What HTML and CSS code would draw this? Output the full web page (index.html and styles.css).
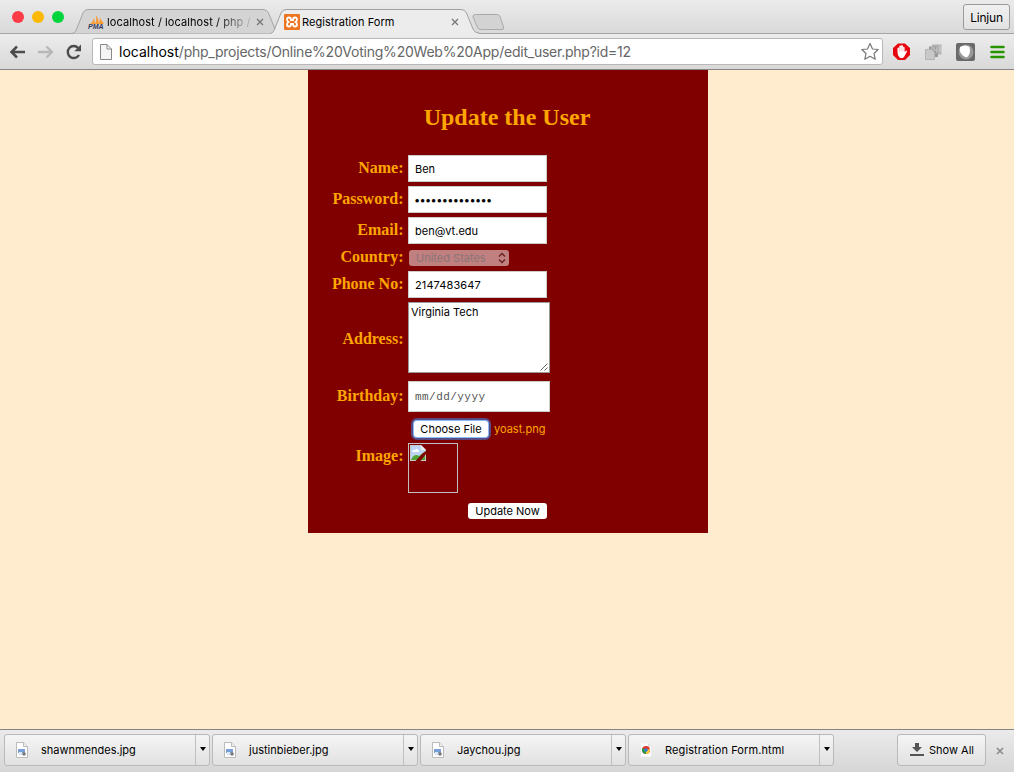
FILE: index.html
```html
<!DOCTYPE html>
<html lang="en">
<head>
<meta charset="utf-8">
<title>Registration Form</title>
<link rel="stylesheet" href="styles.css">
</head>
<body>
<header class="tabstrip">
  <div class="lights"><i class="red"></i><i class="yellow"></i><i class="green"></i></div>
  <div class="tab tab-back">
    <svg class="tab-shape" width="208" height="25" viewBox="0 0 208 25"><path d="M0 24.5C3 24 4 22 5 19L11 4Q12.500 .5 16 .5H191Q195 .5 196.500 4L203 20Q204.500 24 208 24.500" fill="#d4d4d4" stroke="#a5a5a5"/></svg>
    <svg class="pma" width="17" height="15" viewBox="0 0 17 15"><path d="M2 9Q5 7 6 3L7 9zM7 9Q9 5 8 0Q11 4 11 9zM11 9L12 3Q14 6 16 9z" fill="#f79a32"/><text x="0" y="14" class="pma-text">PMA</text></svg>
    <span class="tab-title fade">localhost / localhost / php /</span>
    <svg class="tab-close" width="8" height="8"><path d="M1 1L7 7M7 1L1 7" stroke="#777" stroke-width="1.300"/></svg>
  </div>
  <div class="tab tab-front">
    <svg class="tab-shape" width="210" height="26" viewBox="0 0 210 26"><path d="M0 24.5C3 24 4 22 5 19L11 4Q12.500 .5 16 .5H191Q195 .5 196.500 4L203 20Q204.500 24 210 24.500V26H0z" fill="#ececec"/><path d="M0 24.5C3 24 4 22 5 19L11 4Q12.500 .5 16 .5H191Q195 .5 196.500 4L203 20Q204.500 24 210 24.500" fill="none" stroke="#a0a0a0"/></svg>
    <svg class="xampp" width="16" height="16" viewBox="0 0 16 16"><rect width="16" height="16" rx="1" fill="#ee7623"/><path d="M5 3.500Q2.800 3.500 3 5.500Q3.100 7 4.500 8Q3 9 3 10.500Q3 12.500 5 12.500Q7 12.500 7 10H9Q9 12.500 11 12.500Q13 12.500 13 10.500Q13 9 11.500 8Q13 7 13 5.500Q13 3.500 11 3.500Q9 3.500 9 6H7Q7 3.500 5 3.500z" fill="none" stroke="#fff" stroke-width="1.800"/></svg>
    <span class="tab-title">Registration Form</span>
    <svg class="tab-close" width="8" height="8"><path d="M1 1L7 7M7 1L1 7" stroke="#777" stroke-width="1.300"/></svg>
  </div>
  <svg class="new-tab" width="34" height="17"><path d="M3.500 .5H25Q27 .5 28 2.500L31.500 13Q32.500 15.500 30 15.500H9Q6.500 15.500 5.500 13.500L1 3Q.5 .5 3.500 .5z" fill="#d3d3d3" stroke="#a9a9a9"/></svg>
  <div class="profile">Linjun</div>
</header>
<nav class="toolbar">
  <svg class="nav-icons" width="84" height="20" viewBox="0 0 84 20"><path d="M25 10H11.500M17 4.500L11.500 10L17 15.500" fill="none" stroke="#4c4c4c" stroke-width="2.500"/><path d="M38 10H51M46.500 4.500L52 10L46.500 15.500" fill="none" stroke="#b8b8b8" stroke-width="2.300"/><path d="M78.200 6A6 6 0 1 0 79 13" fill="none" stroke="#4c4c4c" stroke-width="2.400"/><path d="M81 2.500V9.200H74.300z" fill="#4c4c4c"/></svg>
  <div class="address">
    <svg class="page-icon" width="12" height="16"><path d="M.5 .5H7L11.500 5V15.500H.5zM7 .5V5H11.500" fill="#f5f5f5" stroke="#888"/></svg>
    <span class="url"><b>localhost</b>/php_projects/Online%20Voting%20Web%20App/edit_user.php?id=12</span>
    <svg class="star" width="20" height="19" viewBox="0 0 20 19"><path d="M10 1.500L12.500 7L18.200 7.500L14 11.500L15.200 17.200L10 14.300L4.800 17.200L6 11.500L1.800 7.500L7.500 7z" fill="#fff" stroke="#777" stroke-width="1.200" stroke-linejoin="round"/></svg>
  </div>
  <svg class="extensions" width="118" height="20" viewBox="0 0 118 20">
    <path d="M6 1.500H13L18 6V13L13 18H6L1 13V6z" fill="#e8060e"/><path d="M5.500 10V6Q6.500 5 7.300 6V4Q8.300 3 9.200 4V3.500Q10.200 2.500 11 4V5Q12 4.500 12.600 5.500V10L14 8.500Q15.500 8.300 14.800 10L12 15Q10.500 17 7.500 15.500Q5.500 14 5.500 10z" fill="#fff"/><path d="M7.400 5.500V9.500M9.200 4.500V9.500M11 5V9.500" stroke="#f29090" stroke-width=".5"/>
    <path d="M40 2.500H49.500V12.500H40z" fill="#b4b4b4"/><path d="M37 4.500H46V15H37z" fill="#999"/><path d="M39 6H43M41 8H45M45 5V11M48 4V10" stroke="#d0d0d0"/><path d="M33.500 7.500H39.500L42.500 10.500V17.500H33.500z" fill="#c8c8c8" stroke="#b4b4b4"/>
    <rect x="64" y="1" width="19" height="18" rx="2" fill="#696969"/><circle cx="74" cy="10" r="7.500" fill="#999"/><path d="M68 5Q73 2 77.500 5Q79.500 12 74.500 15.500Q66 12 68 5z" fill="#fff"/>
    <path d="M99.500 5H111.500M99.500 10H111.500M99.500 15H111.500" stroke="#289500" stroke-width="2.600" stroke-linecap="round"/>
  </svg>
</nav>
<main class="page">
  <section class="panel">
    <h2 class="heading">Update the User</h2>
    <div class="form">
      <label class="label">Name:</label><div class="field">Ben</div>
      <label class="label">Password:</label><div class="field dots">••••••••••••••</div>
      <label class="label">Email:</label><div class="field email">ben@vt.edu</div>
      <label class="label">Country:</label>
      <div class="select"><span>United States</span><svg width="8" height="12"><path d="M1 4.500L4 1.500L7 4.500M1 7.500L4 10.500L7 7.500" fill="none" stroke="#692020" stroke-width="1.400"/></svg></div>
      <label class="label">Phone No:</label><div class="field phone">2147483647</div>
      <label class="label">Address:</label>
      <div class="textarea">Virginia Tech<svg class="grip" width="8" height="8"><path d="M.5 7.500L7.500 .5M4.500 7.500L7.500 4.500" stroke="#666"/></svg></div>
      <label class="label">Birthday:</label><div class="field date">mm/dd/yyyy</div>
      <label class="label label-image">Image:</label>
      <div class="image-cell">
        <div class="file"><span class="button choose">Choose File</span><span class="filename">yoast.png</span></div>
        <div class="thumb"><svg width="16" height="16" viewBox="0 0 16 16"><path d="M0 0H11L16 5V16H0z" fill="#c8c8c8"/><path d="M1 1H10.500L15 5.500V15H1z" fill="#bcd5f5"/><path d="M2 7Q3 4 5 5Q7 2 9 6V7H2z" fill="#fff"/><path d="M1 15Q4 8 9 11L13 8L15 10V15z" fill="#53a535"/><path d="M11 0V5H16z" fill="#eee"/><path d="M5.500 16L13 8L16 6V9L10.500 16z" fill="#800000"/></svg></div>
      </div>
    </div>
    <div class="actions"><span class="button update">Update Now</span></div>
  </section>
</main>
<footer class="shelf">
  <div class="download"><svg class="doc" width="12" height="16"><path d="M.5 .5H7.500L11.500 4.500V15.500H.5z" fill="#fff" stroke="#bbb"/><path d="M7.500 .5V4.500H11.500" fill="#eee" stroke="#bbb"/><path d="M2 7H9V11H2z" fill="#789fd6"/><path d="M3 10H6V13H3z" fill="#dce6f2"/><circle cx="8" cy="12" r="1.800" fill="#777"/></svg><span class="name">shawnmendes.jpg</span><span class="drop"><i></i></span></div>
  <div class="download"><svg class="doc" width="12" height="16"><path d="M.5 .5H7.500L11.500 4.500V15.500H.5z" fill="#fff" stroke="#bbb"/><path d="M7.500 .5V4.500H11.500" fill="#eee" stroke="#bbb"/><path d="M2 7H9V11H2z" fill="#789fd6"/><path d="M3 10H6V13H3z" fill="#dce6f2"/><circle cx="8" cy="12" r="1.800" fill="#777"/></svg><span class="name">justinbieber.jpg</span><span class="drop"><i></i></span></div>
  <div class="download"><svg class="doc" width="12" height="16"><path d="M.5 .5H7.500L11.500 4.500V15.500H.5z" fill="#fff" stroke="#bbb"/><path d="M7.500 .5V4.500H11.500" fill="#eee" stroke="#bbb"/><path d="M2 7H9V11H2z" fill="#789fd6"/><path d="M3 10H6V13H3z" fill="#dce6f2"/><circle cx="8" cy="12" r="1.800" fill="#777"/></svg><span class="name">Jaychou.jpg</span><span class="drop"><i></i></span></div>
  <div class="download"><svg class="doc" width="12" height="16"><path d="M1 1.500H8L11 4.500V14.500H1z" fill="#fff"/><path d="M8 1.500V4.500H11" fill="#ddd"/><circle cx="6" cy="8" r="4" fill="#e33b2e"/><path d="M6 8L2.500 6A4 4 0 0 0 6 12z" fill="#20a044"/><path d="M6 8L9.800 7A4 4 0 0 1 6 12z" fill="#fc3"/><circle cx="6" cy="8" r="1.800" fill="#3876dc"/></svg><span class="name wide">Registration Form.html</span><span class="drop"><i></i></span></div>
  <div class="show-all"><svg width="14" height="14"><path d="M5 0H9V4H12L7 9L2 4H5zM0 11H14V13H0z" fill="#555"/></svg><span>Show All</span></div>
  <svg class="shelf-close" width="8" height="8"><path d="M1 1L7 7M7 1L1 7" stroke="#888" stroke-width="1.500"/></svg>
</footer>
</body>
</html>
```
FILE: styles.css
```css
* { box-sizing: border-box; }
body {
  margin: 0;
  width: 1014px;
  height: 772px;
  overflow: hidden;
  display: flex;
  flex-direction: column;
  font: 11px/14px Inter, sans-serif;
  color: #000;
  background: #ffebcd;
}
svg { display: block; flex: none; }
span, .field, .textarea { white-space: nowrap; }

.tabstrip {
  height: 34px;
  flex: none;
  display: flex;
  align-items: flex-start;
  padding: 9px 4px 0 12px;
  background: linear-gradient(#ebebeb, #d9d9d9);
  border-bottom: 1px solid #a5a5a5;
}
.lights { display: flex; gap: 8px; padding-top: 2px; margin-right: 8px; }
.lights i { width: 12px; height: 12px; border-radius: 50%; }
.red { background: #fc3b46; }
.yellow { background: #fdb902; }
.green { background: #02d53c; }
.tab { position: relative; height: 26px; display: flex; align-items: center; flex: none; }
.tab > .tab-shape { position: absolute; left: 0; top: 0; }
.tab > :not(.tab-shape) { z-index: 1; }
.tab-back { width: 208px; padding: 0 16px 0 16px; }
.tab-front { width: 206px; padding: 0 17px 0 14px; margin-left: -10px; z-index: 1; }
.tab-title { flex: 1; margin-left: 2px; letter-spacing: .06px; }
.fade {
  letter-spacing: .08px;
  background: linear-gradient(90deg, #000 108px, #aaa 140px);
  -webkit-background-clip: text;
  background-clip: text;
  color: transparent;
}
.pma-text { font: italic bold 7px "Liberation Sans", sans-serif; fill: #35385c; }
.new-tab { margin: 5px 0 0 -4px; }
.profile {
  margin: -5px 0 0 auto;
  width: 47px;
  height: 26px;
  border: 1px solid #9b9b9b;
  border-radius: 3px;
  background: linear-gradient(#f0f0f0, #e2e2e2);
  font-size: 12px;
  line-height: 25px;
  text-align: center;
  letter-spacing: -.2px;
}

.toolbar {
  height: 36px;
  flex: none;
  display: flex;
  align-items: center;
  padding-right: 4px;
  background: linear-gradient(#ececec, #d9d9d9);
  border-bottom: 1px solid #858585;
}
.nav-icons { margin-right: 8px; }
.address {
  width: 791px;
  height: 27px;
  display: flex;
  align-items: center;
  padding: 0 2px 0 7px;
  border: 1px solid #b8b8b8;
  border-radius: 3px;
  background: #fff;
}
.url { flex: 1; margin-left: 7px; font-size: 14px; line-height: 18px; color: #666; letter-spacing: -.235px; }
.url b { font-weight: 400; color: #000; letter-spacing: 0; }
.extensions { margin-left: 9px; }

.page { flex: 1; min-height: 0; }
.panel { width: 400px; height: 463px; margin-left: 308px; background: #800000; color: orange; }
.heading {
  margin: 0;
  height: 85px;
  padding: 33px 2px 0 0;
  font: bold 24px/28px "Liberation Serif", serif;
  text-align: center;
}
.form {
  display: grid;
  grid-template-columns: 96px 142px;
  grid-template-rows: 27px 27px 27px 19px 27px 75px 31px 77px;
  gap: 4px;
}
.label {
  align-self: center;
  padding: 0 .5px 2px 0;
  text-align: right;
  font: bold 16px/18px "Liberation Serif", serif;
}
.label-image { padding: 2px .5px 0 0; }
.field {
  width: 139px;
  height: 27px;
  padding: 0 6px;
  border: 1px solid #ccc;
  background: #fff;
  color: #000;
  line-height: 26px;
}
.dots { padding-left: 5px; letter-spacing: -.65px; }
.phone { letter-spacing: .1px; }
.select {
  align-self: center;
  width: 100px;
  height: 16px;
  margin-left: 1px;
  padding: 0 3px 0 7px;
  display: flex;
  align-items: center;
  justify-content: space-between;
  border-radius: 3px;
  background: #c08080;
  color: #8a7474;
}
.textarea {
  position: relative;
  width: 142px;
  height: 71px;
  padding: 2px;
  border: 1px solid #999;
  background: #fff;
  color: #000;
}
.grip { position: absolute; right: 1px; bottom: 1px; }
.date {
  width: 142px;
  height: 31px;
  font: 11px/30px "Liberation Mono", monospace;
  letter-spacing: .45px;
  color: #555;
}
.image-cell { display: flex; flex-direction: column; justify-content: space-between; }
.file { display: flex; align-items: center; padding: 5px 0 0 6px; gap: 6px; }
.button {
  height: 16px;
  border-radius: 3px;
  background: #fff;
  color: #000;
  line-height: 16px;
  text-align: center;
}
.choose { width: 74px; box-shadow: 0 0 0 1px #8ebcf0, 0 0 0 3px #574b86; }
.filename { color: orange; }
.thumb { width: 50px; height: 50px; padding: 1px; border: 1px solid silver; }
.actions { display: flex; padding: 10px 0 0 160px; }
.update { width: 79px; }

.shelf {
  height: 43px;
  flex: none;
  display: flex;
  align-items: center;
  gap: 2px;
  padding: 0 10px 2px 4px;
  border-top: 1px solid #858585;
  background: linear-gradient(#ebebeb, #d6d6d6);
}
.download, .show-all {
  height: 32px;
  display: flex;
  align-items: center;
  border: 1px solid #b9b9b9;
  border-radius: 3px;
  background: linear-gradient(#f5f5f5, #e1e1e1);
}
.download { width: 206px; padding-left: 11px; }
.name { flex: 1; margin-left: 13px; }
.wide { letter-spacing: .1px; }
.drop { width: 14px; height: 30px; border-left: 1px solid #c0c0c0; display: flex; justify-content: center; padding: 12px 0 0 0; }
.drop i { width: 0; height: 0; border: 3px solid transparent; border-top: 4px solid #000; border-bottom: 0; }
.show-all { width: 89px; margin-left: auto; padding-left: 12px; gap: 5px; }
.shelf-close { margin: 2px 0 0 8px; }
```
